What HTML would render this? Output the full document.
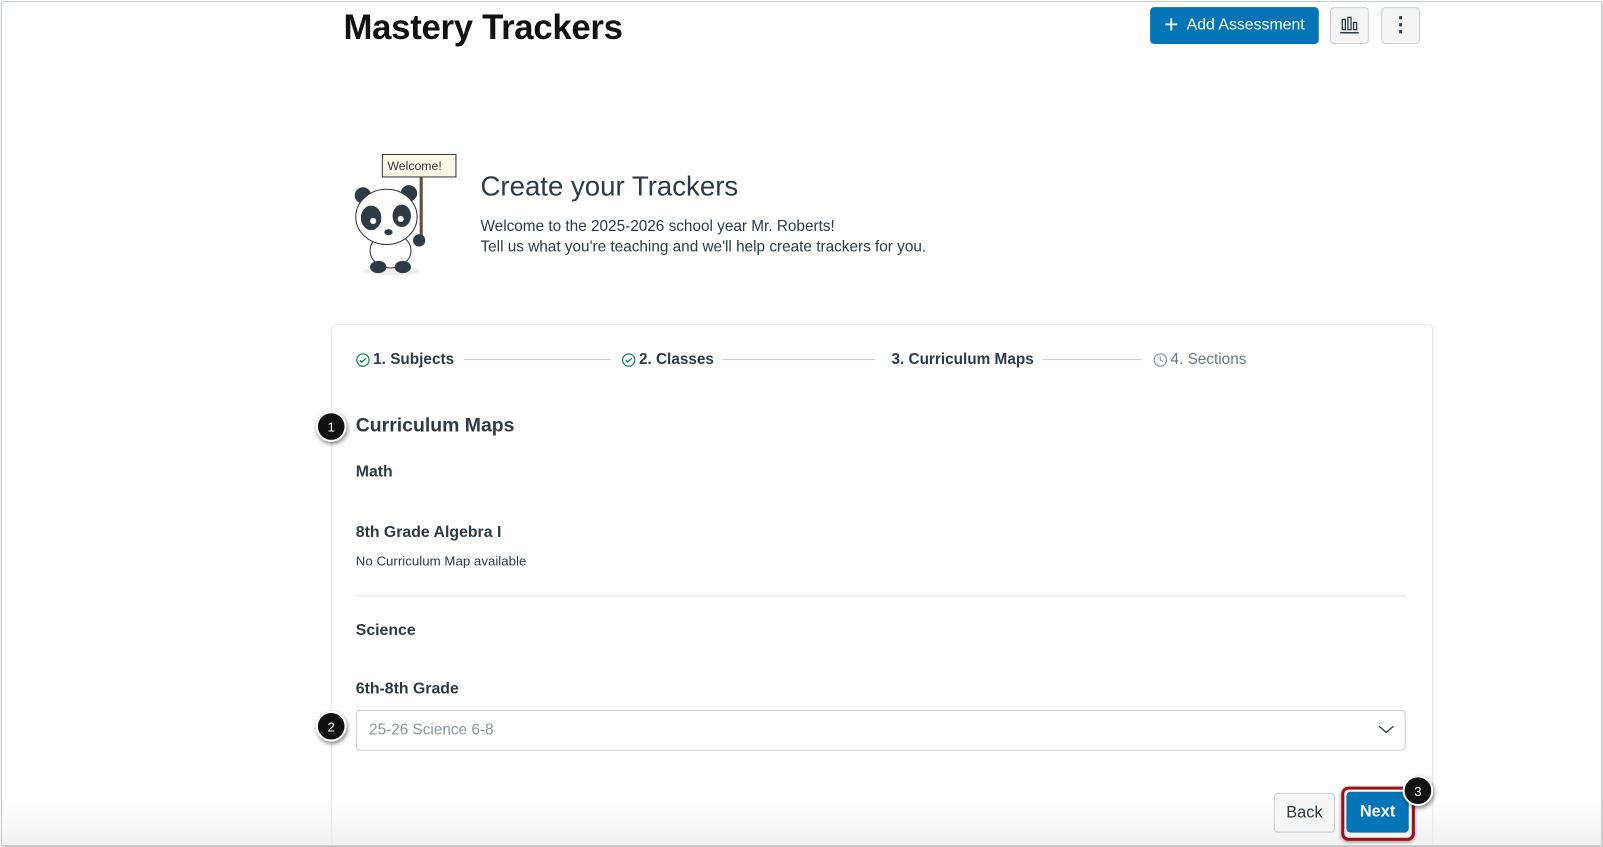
<!DOCTYPE html>
<html><head><style>
body{margin:0;width:1603px;height:847px;background:#fff;font-family:"Liberation Sans",sans-serif;color:#2d3b45;position:relative;overflow:hidden}
.wrap{position:absolute;left:0;top:0;width:1568px;height:828px;transform:scale(1.0223,1.0229);transform-origin:0 0}
.frame{position:absolute;left:1px;top:1px;width:1564px;height:824px;border:1px solid #c7cdd1;box-shadow:1px 2px 3px rgba(0,0,0,.3);overflow:hidden;background:#fff}
.a{position:absolute}
h1{position:absolute;left:334px;top:6px;margin:0;font-size:34px;font-weight:bold;color:#111;letter-spacing:-0.3px}
.btn{position:absolute;border-radius:4px;font-size:16px;display:flex;align-items:center;justify-content:center}
.card{position:absolute;left:322px;top:315px;width:1076px;height:540px;border:1px solid #e3e6e8;border-radius:5px}
.step{position:absolute;top:341px;font-size:15px;font-weight:bold;color:#2d3b45}
.line{position:absolute;top:349px;height:1px;background:#c7cdd1}
.bub{position:absolute;width:26px;height:26px;border-radius:50%;background:#111;color:#fff;font-size:13px;display:flex;align-items:center;justify-content:center;border:2px solid #fff;box-shadow:1px 2px 4px rgba(0,0,0,.5)}
</style></head><body>
<div class="wrap">
<div class="frame">
<h1>Mastery Trackers</h1>
<div class="btn" style="left:1123px;top:5px;width:165px;height:36px;background:#0374b5;color:#fff;font-size:15.5px"><span style="font-size:24px;font-weight:200;margin-right:8px">+</span>Add Assessment</div>
<div class="btn" style="left:1299px;top:5px;width:36px;height:34px;background:#f5f5f5;border:1px solid #c7cdd1">
<svg width="20" height="18"><rect x="3" y="3" width="3" height="10" fill="none" stroke="#2d3b45" stroke-width="1.3"/><rect x="8.5" y="1" width="3" height="12" fill="none" stroke="#2d3b45" stroke-width="1.3"/><rect x="14" y="6" width="3" height="7" fill="none" stroke="#2d3b45" stroke-width="1.3"/><line x1="1" y1="16" x2="19" y2="16" stroke="#2d3b45" stroke-width="1.5"/></svg></div>
<div class="btn" style="left:1349px;top:5px;width:36px;height:34px;background:#f5f5f5;border:1px solid #c7cdd1;font-weight:bold;font-size:20px;line-height:6px;flex-direction:column">⋮</div>

<svg class="a" style="left:336px;top:145px" width="115" height="125">
<rect x="36" y="4" width="72" height="22" fill="#fbf8ea" stroke="#333"/>
<text x="41" y="19" font-size="12" font-family="Liberation Sans" fill="#333">Welcome!</text>
<line x1="74" y1="26" x2="74" y2="86" stroke="#6b4a3a" stroke-width="3"/>
<ellipse cx="45" cy="118" rx="28" ry="4" fill="#eee"/>
<circle cx="17" cy="44" r="8" fill="#2d3b45"/><circle cx="62" cy="42" r="8" fill="#2d3b45"/>
<ellipse cx="44" cy="98" rx="20" ry="17" fill="#fff" stroke="#333"/>
<ellipse cx="32" cy="114" rx="8" ry="6" fill="#2d3b45"/><ellipse cx="56" cy="114" rx="8" ry="6" fill="#2d3b45"/>
<ellipse cx="40" cy="65" rx="30" ry="27" fill="#fff" stroke="#333"/>
<ellipse cx="25" cy="66" rx="10" ry="12" fill="#2d3b45"/><ellipse cx="55" cy="64" rx="9" ry="11" fill="#2d3b45"/>
<circle cx="27" cy="69" r="3" fill="#fff"/><circle cx="54" cy="67" r="3" fill="#fff"/>
<ellipse cx="42" cy="80" rx="4" ry="3" fill="#2d3b45"/>
<circle cx="72" cy="88" r="6" fill="#2d3b45"/>
</svg>
<div class="a" style="left:468px;top:165px;font-size:27px">Create your Trackers</div>
<div class="a" style="left:468px;top:210px;font-size:15px;line-height:20px">Welcome to the 2025-2026 school year Mr. Roberts!<br>Tell us what you're teaching and we'll help create trackers for you.</div>

<div class="card"></div>
<svg class="a" style="left:346px;top:343px" width="14" height="14"><circle cx="7" cy="7" r="6" fill="none" stroke="#0b874b" stroke-width="1.2"/><path d="M4 7l2 2 4-4" fill="none" stroke="#0b874b" stroke-width="1.2"/></svg>
<div class="step" style="left:363px">1. Subjects</div>
<div class="line" style="left:452px;width:143px"></div>
<svg class="a" style="left:606px;top:343px" width="14" height="14"><circle cx="7" cy="7" r="6" fill="none" stroke="#0b874b" stroke-width="1.2"/><path d="M4 7l2 2 4-4" fill="none" stroke="#0b874b" stroke-width="1.2"/></svg>
<div class="step" style="left:623px">2. Classes</div>
<div class="line" style="left:704px;width:150px"></div>
<div class="step" style="left:870px">3. Curriculum Maps</div>
<div class="line" style="left:1018px;width:96px"></div>
<svg class="a" style="left:1126px;top:343px" width="14" height="14"><circle cx="7" cy="7" r="6" fill="none" stroke="#8b969e" stroke-width="1.2"/><path d="M7 3.5V7l2.5 1.5" fill="none" stroke="#8b969e" stroke-width="1.2"/></svg>
<div class="step" style="left:1143px;font-weight:normal;color:#6b7780">4. Sections</div>

<div class="bub" style="left:307px;top:400px">1</div>
<div class="a" style="left:346px;top:404px;font-size:19px;font-weight:bold">Curriculum Maps</div>
<div class="a" style="left:346px;top:451px;font-size:15.5px;font-weight:bold">Math</div>
<div class="a" style="left:346px;top:510px;font-size:15.5px;font-weight:bold">8th Grade Algebra I</div>
<div class="a" style="left:346px;top:539px;font-size:13px">No Curriculum Map available</div>
<div class="a" style="left:346px;top:580px;width:1028px;height:1px;background:#e3e6e8"></div>
<div class="a" style="left:346px;top:606px;font-size:15.5px;font-weight:bold">Science</div>
<div class="a" style="left:346px;top:663px;font-size:15.5px;font-weight:bold">6th-8th Grade</div>
<div class="bub" style="left:307px;top:693px">2</div>
<div class="a" style="left:346px;top:692px;width:1025px;height:38px;border:1px solid #c7cdd1;border-radius:4px"></div>
<div class="a" style="left:359px;top:703px;font-size:15px;color:#8b969e">25-26 Science 6-8</div>
<svg class="a" style="left:1346px;top:706px" width="16" height="10"><path d="M1 2l7 6 7-6" fill="none" stroke="#2d3b45" stroke-width="1.3"/></svg>

<div class="a" style="left:0;top:780px;width:1566px;height:50px;background:linear-gradient(rgba(255,255,255,0),rgba(235,235,235,.8))"></div>
<div class="btn" style="left:1244px;top:773px;width:58px;height:37px;background:#f5f5f5;border:1px solid #c7cdd1">Back</div>
<div class="a" style="left:1310px;top:767px;width:66px;height:47px;border:3px solid #9b0f18;border-radius:7px;box-shadow:0 1px 3px rgba(0,0,0,.4)"></div>
<div class="btn" style="left:1315px;top:772px;width:61px;height:40px;background:#0374b5;color:#fff;font-weight:bold">Next</div>
<div class="bub" style="left:1370px;top:756px">3</div>
</div>
</div>
</body></html>
